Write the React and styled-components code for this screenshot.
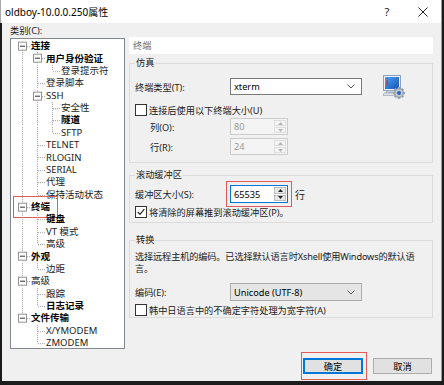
import React from "react";
import styled, { createGlobalStyle } from "styled-components";

const GlobalStyle = createGlobalStyle`
  html, body {
    margin: 0;
    padding: 0;
    background: #1c1c1c;
  }
  body {
    font-family: "Noto Sans", "Noto Sans CJK SC", sans-serif;
    font-size: 9.2px;
    color: #1a1a1a;
  }
`;

const tree = [
  {
    label: "连接",
    bold: true,
    children: [
      { label: "用户身份验证", bold: true, children: [{ label: "登录提示符" }] },
      { label: "登录脚本" },
      {
        label: "SSH",
        children: [{ label: "安全性" }, { label: "隧道", bold: true }, { label: "SFTP" }],
      },
      { label: "TELNET" },
      { label: "RLOGIN" },
      { label: "SERIAL" },
      { label: "代理" },
      { label: "保持活动状态" },
    ],
  },
  {
    label: "终端",
    bold: true,
    marked: true,
    children: [{ label: "键盘", bold: true }, { label: "VT 模式" }, { label: "高级" }],
  },
  { label: "外观", bold: true, children: [{ label: "边距" }] },
  { label: "高级", children: [{ label: "跟踪" }, { label: "日志记录", bold: true }] },
  {
    label: "文件传输",
    bold: true,
    children: [{ label: "X/YMODEM" }, { label: "ZMODEM" }],
  },
];

function flatten(nodes, depth = 0, guides = [], out = []) {
  nodes.forEach((n, i) => {
    const hasNext = i < nodes.length - 1;
    out.push({
      ...n,
      depth,
      guides,
      hasNext,
      first: depth === 0 && i === 0,
      hasChildren: !!n.children,
    });
    if (n.children) flatten(n.children, depth + 1, [...guides, hasNext], out);
  });
  return out;
}

const rows = flatten(tree);

const Screen = styled.div`
  width: 444px;
  height: 385px;
  overflow: hidden;
  background: #1c1c1c;
`;

const Window = styled.div`
  width: 442px;
  height: 381px;
  display: flex;
  flex-direction: column;
  border-right: 1px solid #9b9b9b;
  box-sizing: border-box;
`;

const TitleBar = styled.div`
  height: 23px;
  flex: none;
  background: #fff;
  display: flex;
  align-items: center;
  padding-left: 4px;
  border-left: 1px solid #a8a8a8;
`;

const TitleText = styled.span`
  font-size: 10px;
  color: #000;
`;

const TitleButton = styled.div`
  width: 36px;
  height: 23px;
  display: flex;
  align-items: center;
  justify-content: center;
  font-size: 11px;
  color: #222;
  &:first-of-type {
    margin-left: auto;
  }
`;

const Body = styled.div`
  flex: 1;
  margin-left: 2px;
  background: #f0f0f0;
  padding: 0 8px 0 8px;
  display: flex;
  flex-direction: column;
`;

const Main = styled.div`
  display: flex;
  height: 326px;
`;

const LeftCol = styled.div`
  width: 115px;
  display: flex;
  flex-direction: column;
`;

const CategoryLabel = styled.div`
  height: 15px;
  line-height: 15px;
`;

const TreeBox = styled.div`
  height: 311px;
  box-sizing: border-box;
  border: 1px solid #828790;
  background: #fff;
  padding-top: 1px;
`;

const TreeRow = styled.div`
  position: relative;
  height: 12.375px;
  display: flex;
  align-items: center;
  padding-left: 4px;
`;

const TreeCell = styled.svg`
  width: 15px;
  height: 12.375px;
  flex: none;
`;

const TreeLabel = styled.span`
  padding-left: 1px;
  white-space: nowrap;
  line-height: 12px;
  font-size: 9.5px;
  font-weight: ${(p) => (p.$bold ? 700 : 400)};
  color: ${(p) => (p.$bold ? "#000" : "#222")};
`;

const Mark = styled.span`
  position: absolute;
  left: 2px;
  top: -5px;
  width: 45px;
  height: 22px;
  border: 1px solid #e25a5a;
  box-sizing: border-box;
  pointer-events: none;
`;

const RightCol = styled.div`
  margin-left: 4px;
  width: 304px;
  padding-top: 14px;
`;

const PanelHeader = styled.div`
  height: 17px;
  line-height: 17px;
  background: #fff;
  color: #6e6e6e;
  padding-left: 4px;
`;

const Group = styled.fieldset`
  margin: ${(p) => p.$gap}px 0 0;
  padding: ${(p) => p.$pt}px 5px ${(p) => p.$pb}px;
  border: 1px solid #dcdcdc;
  min-width: 0;
`;

const Legend = styled.legend`
  padding: 0 1px;
  line-height: 12px;
`;

const FormRow = styled.div`
  display: flex;
  align-items: center;
  height: ${(p) => p.$h || 17}px;
  margin-top: ${(p) => p.$mt || 0}px;
`;

const FieldLabel = styled.span`
  width: ${(p) => 95 - (p.$indent || 0)}px;
  padding-left: ${(p) => p.$indent || 0}px;
  flex: none;
`;

const Select = styled.div`
  width: 132px;
  height: 100%;
  box-sizing: border-box;
  border: 1px solid ${(p) => (p.$readonly ? "#adadad" : "#7a7a7a")};
  background: ${(p) => (p.$readonly ? "#e5e5e5" : "#fff")};
  display: flex;
  align-items: center;
  padding: 0 6px 0 3px;
  color: #000;
  & > span {
    flex: 1;
  }
`;

const Spin = styled.div`
  width: 58px;
  height: 100%;
  box-sizing: border-box;
  border: 1px solid ${(p) => (p.$disabled ? "#cccccc" : "#0078d7")};
  background: ${(p) => (p.$disabled ? "#f4f4f4" : "#fff")};
  color: ${(p) => (p.$disabled ? "#9a9a9a" : "#000")};
  display: flex;
  align-items: stretch;
  outline: ${(p) => (p.$marked ? "1px solid #e25a5a" : "none")};
  outline-offset: 3px;
  & > span {
    flex: 1;
    display: flex;
    align-items: center;
    padding-left: 3px;
  }
`;

const SpinButtons = styled.div`
  width: 12px;
  display: flex;
  flex-direction: column;
  gap: 1px;
  padding: 1px 1px 1px 0;
`;

const SpinButton = styled.div`
  flex: 1;
  display: flex;
  align-items: center;
  justify-content: center;
  border: 1px solid ${(p) => (p.$disabled ? "#dedede" : "#bdbdbd")};
  background: ${(p) => (p.$disabled ? "#f4f4f4" : "#e8e8e8")};
`;

const Unit = styled.span`
  margin-left: 7px;
  font-size: 10px;
`;

const CheckRow = styled.label`
  display: flex;
  align-items: center;
  height: 14px;
  margin-top: ${(p) => p.$mt || 0}px;
  gap: 2px;
`;

const Box = styled.span`
  width: 10px;
  height: 10px;
  border: 1px solid #333;
  background: #fff;
  display: flex;
  align-items: center;
  justify-content: center;
  flex: none;
`;

const Desc = styled.div`
  line-height: 11.5px;
  white-space: nowrap;
  letter-spacing: -0.15px;
`;

const Buttons = styled.div`
  display: flex;
  justify-content: flex-end;
  gap: 10px;
  margin-top: 9px;
  margin-right: 1px;
`;

const Button = styled.div`
  position: relative;
  width: ${(p) => p.$w}px;
  height: 16px;
  box-sizing: border-box;
  border: 1px solid ${(p) => (p.$primary ? "#0078d7" : "#adadad")};
  box-shadow: ${(p) => (p.$primary ? "inset 0 0 0 1px #0078d7" : "none")};
  background: #e1e1e1;
  display: flex;
  align-items: center;
  justify-content: center;
  color: #000;
`;

const ButtonMark = styled.span`
  position: absolute;
  left: -3px;
  right: -5px;
  top: -7px;
  bottom: -7px;
  border: 1px solid #e25a5a;
`;

const IconWrap = styled.div`
  margin: -4px 0 -4px 21px;
  width: 22px;
  height: 25px;
`;

function Connector({ row, own, pipe }) {
  if (!own) {
    return (
      <TreeCell viewBox="0 0 15 12">
        {pipe && <line x1="7.5" y1="0" x2="7.5" y2="12" stroke="#a0a0a0" strokeDasharray="1 1" />}
      </TreeCell>
    );
  }
  return (
    <TreeCell viewBox="0 0 15 12">
      {!row.first && <line x1="7.5" y1="0" x2="7.5" y2="6" stroke="#a0a0a0" strokeDasharray="1 1" />}
      {row.hasNext && <line x1="7.5" y1="6" x2="7.5" y2="12" stroke="#a0a0a0" strokeDasharray="1 1" />}
      <line x1="8" y1="6.5" x2="15" y2="6.5" stroke="#a0a0a0" strokeDasharray="1 1" />
      {row.hasChildren && (
        <g>
          <rect x="3.5" y="2" width="8" height="8" fill="#fff" stroke="#939393" />
          <line x1="5" y1="6" x2="10" y2="6" stroke="#333" />
        </g>
      )}
    </TreeCell>
  );
}

function Chevron() {
  return (
    <svg width="8" height="5" viewBox="0 0 8 5">
      <path d="M0.5 0.5 L4 4 L7.5 0.5" fill="none" stroke="#555" strokeWidth="1" />
    </svg>
  );
}

function Arrow({ up, color }) {
  return (
    <svg width="5" height="3" viewBox="0 0 5 3">
      <path d={up ? "M0 3 L2.5 0 L5 3 Z" : "M0 0 L2.5 3 L5 0 Z"} fill={color} />
    </svg>
  );
}

function SpinBox({ value, disabled, marked }) {
  const c = disabled ? "#b5b5b5" : "#222";
  return (
    <Spin $disabled={disabled} $marked={marked}>
      <span>{value}</span>
      <SpinButtons>
        <SpinButton $disabled={disabled}>
          <Arrow up color={c} />
        </SpinButton>
        <SpinButton $disabled={disabled}>
          <Arrow color={c} />
        </SpinButton>
      </SpinButtons>
    </Spin>
  );
}

function Check({ checked }) {
  return (
    <Box>
      {checked && (
        <svg width="8" height="8" viewBox="0 0 8 8">
          <path d="M0.8 4 L3 6.3 L7.3 1.2" fill="none" stroke="#222" strokeWidth="1.2" />
        </svg>
      )}
    </Box>
  );
}

function TerminalIcon() {
  return (
    <svg width="22" height="25" viewBox="0 0 22 25">
      <defs>
        <linearGradient id="scr" x1="0" y1="0" x2="1" y2="1">
          <stop offset="0" stopColor="#4aa3f0" />
          <stop offset="1" stopColor="#1652b8" />
        </linearGradient>
      </defs>
      <rect x="0.5" y="1.5" width="17" height="15" fill="#eef2f7" stroke="#8ba2bd" />
      <rect x="2" y="3" width="14" height="12" fill="url(#scr)" />
      <rect x="3.5" y="4" width="1.2" height="1.2" fill="#e23030" />
      <rect x="3.5" y="6" width="1.2" height="6" fill="#e23030" />
      <path d="M4 16.5 L14 16.5 L15 19 L3 19 Z" fill="#c9d2dc" stroke="#8d9aa8" strokeWidth="0.6" />
      <path d="M1 19 L17 19 L18 21.5 L0 21.5 Z" fill="#dfe5eb" stroke="#8d9aa8" strokeWidth="0.6" />
      <g transform="translate(16 19)">
        <circle r="5" fill="#9aa3ad" />
        {[0, 45, 90, 135].map((a) => (
          <rect key={a} x="-1.2" y="-6" width="2.4" height="12" fill="#9aa3ad" transform={`rotate(${a})`} />
        ))}
        <circle r="3.6" fill="#c3cad2" />
        <circle r="2" fill="#2b63c7" />
      </g>
    </svg>
  );
}

function CloseIcon() {
  return (
    <svg width="10" height="10" viewBox="0 0 10 10">
      <path d="M0.5 0.5 L9.5 9.5 M9.5 0.5 L0.5 9.5" stroke="#222" strokeWidth="1" />
    </svg>
  );
}

export default function App() {
  return (
    <Screen>
      <GlobalStyle />
      <Window>
        <TitleBar>
          <TitleText>oldboy-10.0.0.250属性</TitleText>
          <TitleButton>?</TitleButton>
          <TitleButton>
            <CloseIcon />
          </TitleButton>
        </TitleBar>
        <Body>
          <Main>
            <LeftCol>
              <CategoryLabel>类别(C):</CategoryLabel>
              <TreeBox>
                {rows.map((row, i) => (
                  <TreeRow key={i}>
                    {row.guides.map((g, j) => (
                      <Connector key={j} pipe={g} />
                    ))}
                    <Connector own row={row} />
                    <TreeLabel $bold={row.bold}>{row.label}</TreeLabel>
                    {row.marked && <Mark />}
                  </TreeRow>
                ))}
              </TreeBox>
            </LeftCol>
            <RightCol>
              <PanelHeader>终端</PanelHeader>
              <Group $gap={3} $pt={9} $pb={7}>
                <Legend>仿真</Legend>
                <FormRow>
                  <FieldLabel>终端类型(T):</FieldLabel>
                  <Select>
                    <span>xterm</span>
                    <Chevron />
                  </Select>
                  <IconWrap>
                    <TerminalIcon />
                  </IconWrap>
                </FormRow>
                <CheckRow $mt={8}>
                  <Check />
                  连接后使用以下终端大小(U)
                </CheckRow>
                <FormRow $mt={1}>
                  <FieldLabel $indent={15}>列(O):</FieldLabel>
                  <SpinBox value="80" disabled />
                </FormRow>
                <FormRow $mt={3}>
                  <FieldLabel $indent={15}>行(R):</FieldLabel>
                  <SpinBox value="24" disabled />
                </FormRow>
              </Group>
              <Group $gap={6} $pt={4} $pb={3}>
                <Legend>滚动缓冲区</Legend>
                <FormRow $h={18}>
                  <FieldLabel>缓冲区大小(S):</FieldLabel>
                  <SpinBox value="65535" marked />
                  <Unit>行</Unit>
                </FormRow>
                <CheckRow $mt={2}>
                  <Check checked />
                  将清除的屏幕推到滚动缓冲区(P)。
                </CheckRow>
              </Group>
              <Group $gap={11} $pt={5} $pb={0}>
                <Legend>转换</Legend>
                <Desc>
                  选择远程主机的编码。已选择默认语言时Xshell使用Windows的默认语
                  <br />
                  言。
                </Desc>
                <FormRow $h={18} $mt={9}>
                  <FieldLabel>编码(E):</FieldLabel>
                  <Select $readonly>
                    <span>Unicode (UTF-8)</span>
                    <Chevron />
                  </Select>
                </FormRow>
                <CheckRow $mt={2}>
                  <Check />
                  韩中日语言中的不确定字符处理为宽字符(A)
                </CheckRow>
              </Group>
            </RightCol>
          </Main>
          <Buttons>
            <Button $w={60} $primary>
              确定
              <ButtonMark />
            </Button>
            <Button $w={59}>取消</Button>
          </Buttons>
        </Body>
      </Window>
    </Screen>
  );
}
